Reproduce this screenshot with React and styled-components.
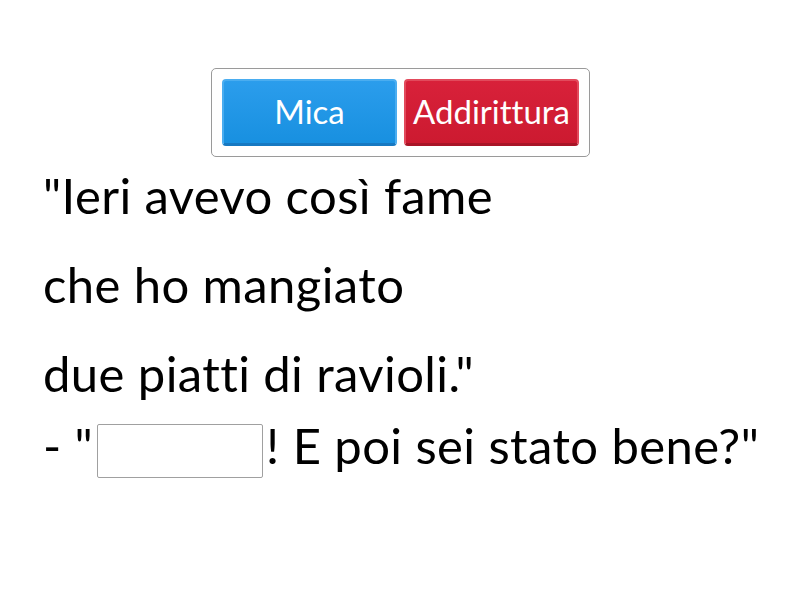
import React from "react";
import styled, { createGlobalStyle } from "styled-components";

const GlobalStyle = createGlobalStyle`
    body{
        margin:0;
        background:#ffffff;
        font-family: "Lato", "Open Sans", sans-serif;
        font-variant-ligatures: none;
        color:#000000;
    }
`;

const Page = styled.div`
    width:800px;
    height:600px;
    box-sizing:border-box;
    padding:68px 0 0 43px;
    overflow:hidden;
`;

const OptionsBox = styled.div`
    display:flex;
    gap:7px;
    width:max-content;
    margin:0 0 0 168px;
    padding:10px;
    border:1px solid #9a9a9a;
    border-radius:5px;
`;

const OptionButton = styled.div`
    width:175px;
    height:67px;
    box-sizing:border-box;
    display:flex;
    align-items:center;
    justify-content:center;
    color:#ffffff;
    font-size:33px;
    padding-bottom:2px;
    border-radius:4px;
    background:${(p) => p.$bg};
    border-top:2px solid ${(p) => p.$light};
    border-left:2px solid ${(p) => p.$light};
    border-right:2px solid ${(p) => p.$light};
    border-bottom:3px solid ${(p) => p.$dark};
`;

const Sentence = styled.div`
    margin-top:-6px;
`;

const Line = styled.div`
    font-size:49px;
    letter-spacing:0.4px;
    line-height:${(p) => p.$h}px;
    margin-top:${(p) => p.$offset || 0}px;
    white-space:nowrap;
    display:flex;
    align-items:flex-start;
`;

const Blank = styled.div`
    width:164px;
    height:52px;
    margin:9px 3px 0 4px;
    border:1px solid #a0a0a0;
    border-radius:2px;
`;

function App() {
    return (
        <>
            <GlobalStyle />
            <Page>
                <OptionsBox>
                    <OptionButton $bg="linear-gradient(#2b9dec,#1890e0)" $light="#4aadf0" $dark="#1779c2">Mica</OptionButton>
                    <OptionButton $bg="linear-gradient(#d8213a,#cc1a30)" $light="#e24a5c" $dark="#a91527">Addirittura</OptionButton>
                </OptionsBox>
                <Sentence>
                    <Line $h={89}>"Ieri avevo così fame</Line>
                    <Line $h={89}>che ho mangiato</Line>
                    <Line $h={89}>due piatti di ravioli."</Line>
                    <Line $h={60} $offset={-3}>- "<Blank />! E poi sei stato bene?"</Line>
                </Sentence>
            </Page>
        </>
    );
}

export default App;
